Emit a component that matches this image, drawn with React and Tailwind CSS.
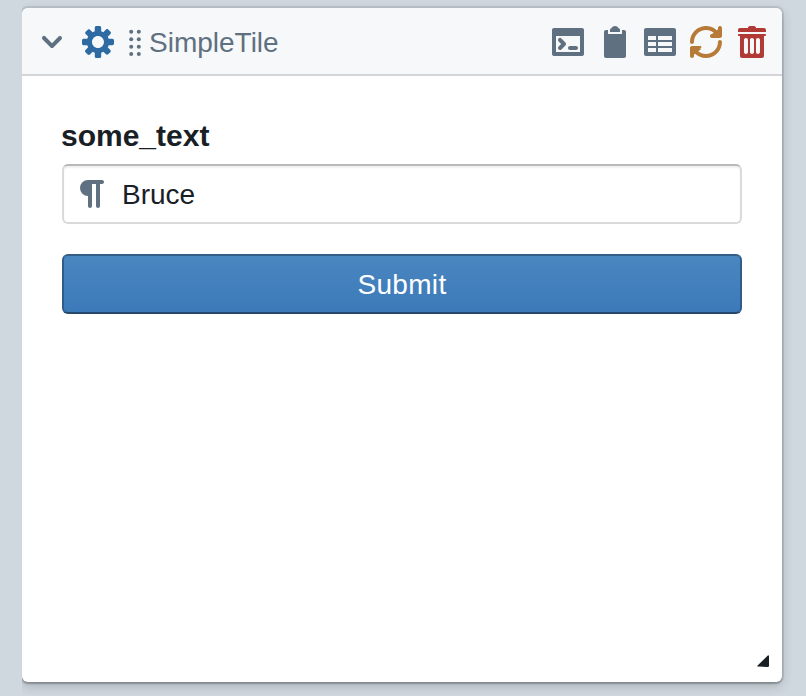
const ICONS = {
  chevron:
    'M12 5c-.28 0-.53.11-.71.29L8 8.59l-3.29-3.3a1.003 1.003 0 00-1.42 1.42l4 4c.18.18.43.29.71.29s.53-.11.71-.29l4-4A1.003 1.003 0 0012 5z',
  cog: 'M15.19 6.39h-1.85c-.11-.37-.27-.71-.45-1.04l1.36-1.36c.31-.31.31-.82 0-1.13l-1.13-1.13c-.31-.31-.82-.31-1.13 0l-1.36 1.36c-.33-.17-.67-.33-1.04-.44V.79c0-.44-.36-.8-.8-.8h-1.6c-.44 0-.8.36-.8.8v1.86c-.39.12-.75.28-1.1.47l-1.3-1.3c-.3-.3-.79-.3-1.09 0L1.82 2.91c-.3.3-.3.79 0 1.09l1.3 1.3c-.2.34-.36.7-.48 1.09H.79c-.44 0-.8.36-.8.8v1.6c0 .44.36.8.8.8h1.85c.11.37.27.71.45 1.04l-1.36 1.36c-.31.31-.31.82 0 1.13l1.13 1.13c.31.31.82.31 1.13 0l1.36-1.36c.33.18.67.33 1.04.44v1.86c0 .44.36.8.8.8h1.6c.44 0 .8-.36.8-.8v-1.86c.39-.12.75-.28 1.1-.47l1.3 1.3c.3.3.79.3 1.09 0l1.09-1.09c.3-.3.3-.79 0-1.09l-1.3-1.3c.19-.35.36-.71.48-1.1h1.85c.44 0 .8-.36.8-.8v-1.6a.816.816 0 00-.81-.79zm-7.2 4.6c-1.66 0-3-1.34-3-3s1.34-3 3-3 3 1.34 3 3-1.34 3-3 3z',
  console:
    'M15 1H1c-.55 0-1 .45-1 1v12c0 .55.45 1 1 1h14c.55 0 1-.45 1-1V2c0-.55-.45-1-1-1zm-1 12H2V5h12v8zM4 12c.28 0 .53-.11.71-.29l2-2c.18-.18.29-.43.29-.71s-.11-.53-.29-.71l-2-2a1.003 1.003 0 00-1.42 1.42L4.59 9l-1.3 1.29c-.18.18-.29.43-.29.71 0 .55.45 1 1 1zm5 0h3c.55 0 1-.45 1-1s-.45-1-1-1H9c-.55 0-1 .45-1 1s.45 1 1 1z',
  clipboard:
    'M11 2c0-.55-.45-1-1-1h.22C9.88.4 9.24 0 8.5 0S7.12.4 6.78 1H7c-.55 0-1 .45-1 1v1h5V2zm2 0h-1v2H5V2H4c-.55 0-1 .45-1 1v12c0 .55.45 1 1 1h9c.55 0 1-.45 1-1V3c0-.55-.45-1-1-1z',
  table:
    'M15 1H1c-.6 0-1 .5-1 1v12c0 .6.4 1 1 1h14c.6 0 1-.4 1-1V2c0-.5-.4-1-1-1zM6 13H2v-2h4v2zm0-3H2V8h4v2zm0-3H2V5h4v2zm8 6H7v-2h7v2zm0-3H7V8h7v2zm0-3H7V5h7v2z',
  refresh:
    'M14.99 6.99c-.55 0-1 .45-1 1 0 3.31-2.69 6-6 6-1.77 0-3.36-.78-4.46-2L5.5 10.99c.3-.2.3-.99-.51-.99h-4c-.55 0-1 .45-1 1v4c0 .55.45 1 1 1s1-.45 1-1v-1.74a7.95 7.95 0 006 2.74c4.42 0 8-3.58 8-8 0-.55-.45-1-1-1zm0-7c-.55 0-1 .45-1 1v1.74a7.95 7.95 0 00-6-2.74c-4.42 0-8 3.58-8 8 0 .55.45 1 1 1s1-.45 1-1c0-3.31 2.69-6 6-6 1.77 0 3.36.78 4.46 2h-1.46c-.55 0-1 .45-1 1s.45 1 1 1h4c.55 0 1-.45 1-1v-4c0-.55-.45-1-1-1z',
  trash:
    'M14.49 3.99h-13c-.28 0-.5.22-.5.5s.22.5.5.5h.5v10c0 .55.45 1 1 1h10c.55 0 1-.45 1-1v-10h.5c.28 0 .5-.22.5-.5s-.22-.5-.5-.5zm-8.5 9c0 .55-.45 1-1 1s-1-.45-1-1v-6c0-.55.45-1 1-1s1 .45 1 1v6zm3 0c0 .55-.45 1-1 1s-1-.45-1-1v-6c0-.55.45-1 1-1s1 .45 1 1v6zm3 0c0 .55-.45 1-1 1s-1-.45-1-1v-6c0-.55.45-1 1-1s1 .45 1 1v6zm2-12h-4c0-.55-.45-1-1-1h-2c-.55 0-1 .45-1 1h-4c-.55 0-1 .45-1 1v1h14v-1c0-.55-.45-1-1-1z',
  paragraph:
    'M6 1h7c.55 0 1 .45 1 1s-.45 1-1 1h-1v11c0 .55-.45 1-1 1s-1-.45-1-1V3H8v11c0 .55-.45 1-1 1s-1-.45-1-1V9a4 4 0 010-8z',
};

function Icon({ name, className = '', children }) {
  return (
    <svg viewBox="0 0 16 16" fill="currentColor" fillRule="evenodd" className={`size-8 shrink-0 ${className}`}>
      <path d={ICONS[name]} />
      {children}
    </svg>
  );
}

function DragHandle() {
  return (
    <svg viewBox="0 0 12 28" fill="currentColor" className="ml-[15px] h-7 w-3 shrink-0">
      {[3.8, 11.2, 18.7, 26].map((y) => (
        <g key={y}>
          <circle cx="2.2" cy={y} r="2" />
          <circle cx="9.8" cy={y} r="2" />
        </g>
      ))}
    </svg>
  );
}

export default function App() {
  return (
    <div className="h-[696px] w-[806px] overflow-hidden bg-[#d0d8df] pl-[22px] font-['Helvetica_Neue','Liberation_Sans',Arial,sans-serif] text-[28px] text-[#182026]">
      <div className="h-full overflow-hidden pt-2">
        <section className="flex h-[674px] w-[760px] flex-col rounded-md bg-white shadow-[0_0_0_2px_rgba(16,22,26,0.1),0_2px_2px_rgba(16,22,26,0.2),0_4px_12px_rgba(16,22,26,0.2)]">
          <header className="flex h-[68px] shrink-0 items-center rounded-t-md border-b-2 border-[#d3d5d9] bg-[#f6f8fa] pr-[14px] pl-[14px] pt-[2px] text-[#5f7080]">
            <Icon name="chevron" />
            <Icon name="cog" className="ml-[14px] text-[#2f6ba3]" />
            <DragHandle />
            <span className="ml-2 pt-[2px] leading-8">SimpleTile</span>
            <div className="ml-auto flex items-center gap-[14px]">
              <Icon name="console" />
              <Icon name="clipboard" />
              <Icon name="table" />
              <Icon name="refresh" className="text-[#b77a37]">
                <path d="M14.5 1.200L10.400 4.500L12.500 5.500H15.500ZM1.500 14.800L5.600 11.500L3.500 10.500H.5Z" />
              </Icon>
              <Icon name="trash" className="text-[#b23a36]" />
            </div>
          </header>
          <div className="flex flex-1 flex-col px-10 pt-11">
            <label className="-ml-px text-[30px] leading-8 font-bold">some_text</label>
            <div className="mt-3 flex h-[60px] items-center rounded-md border-2 border-[#dadada] border-t-[#b9b9b9] pl-3 shadow-[inset_0_2px_2px_rgba(16,22,26,0.06)]">
              <Icon name="paragraph" className="text-[#5f7080]" />
              <span className="ml-[14px] pt-[2px]">Bruce</span>
            </div>
            <button className="mt-[30px] h-[60px] rounded-md border-2 border-x-[#2f5c88] border-t-[#345e86] border-b-[#26486c] bg-linear-to-b from-[#4a87c0] to-[#3b79b9] pt-[2px] tracking-[0.3px] text-white">
              Submit
            </button>
            <svg viewBox="0 0 12 12" className="mt-auto mr-[-27px] mb-[15px] size-3 self-end fill-[#182026]">
              <path d="M10.800.4Q11.900 0 12 1.200V10.800Q12 12 10.800 12L1 11.600Q-.3 11.400.6 10.600Z" />
            </svg>
          </div>
        </section>
      </div>
    </div>
  );
}
